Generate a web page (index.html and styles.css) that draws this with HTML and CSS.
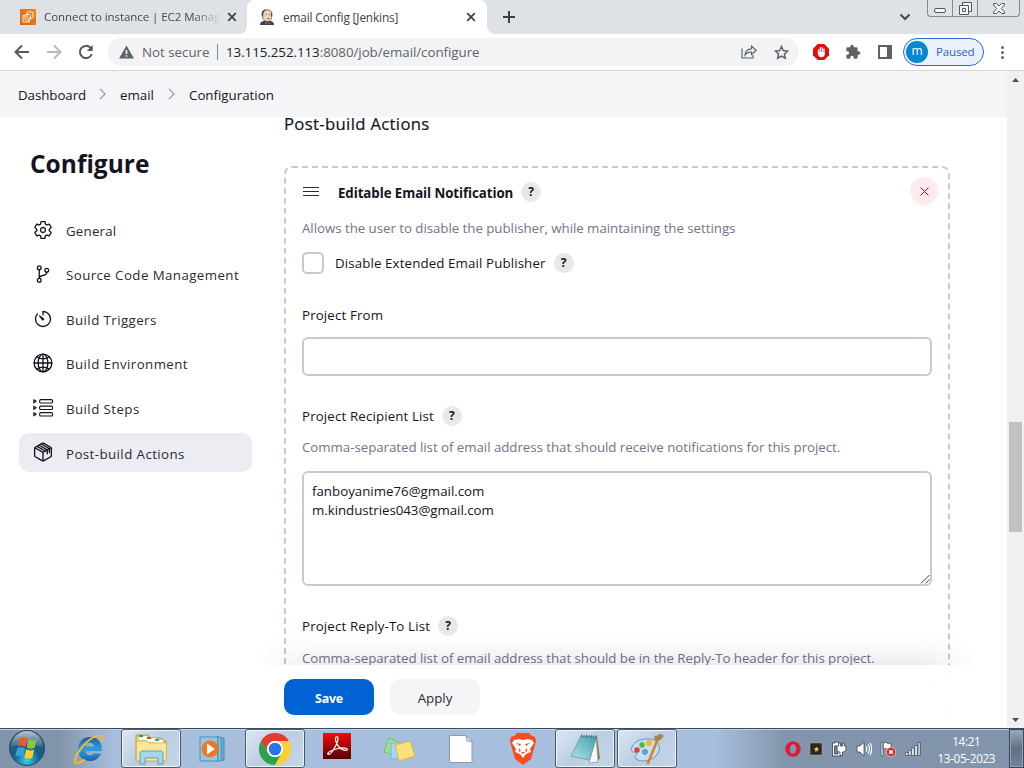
FILE: index.html
```html
<!DOCTYPE html>
<html lang="en">
<head>
<meta charset="utf-8">
<title>email Config [Jenkins]</title>
<link rel="stylesheet" href="styles.css">
</head>
<body>
<div class="screen">
  <header class="tabstrip">
    <div class="tab tab-idle">
      <svg class="fav" viewBox="0 0 16 16"><defs><linearGradient id="aws" x1="0" y1="1" x2="1" y2="0"><stop stop-color="#d86413"/><stop offset="1" stop-color="#f48a12"/></linearGradient></defs><path fill="url(#aws)" d="M0 0h16v16H0z"/><g fill="none" stroke="#fff" stroke-opacity=".9" stroke-width="1"><rect x="7" y="3" width="6" height="6" rx="1"/><path d="M5 6.500H3V13h6.500v-2"/><rect x="5" y="5.500" width="5.500" height="5.500" rx="1"/></g></svg>
      <span class="tab-title fade">Connect to instance | EC2 Manag</span>
      <svg class="x" viewBox="0 0 10 10"><path d="M1.200 1.200l7.600 7.600M8.800 1.200L1.200 8.800"/></svg>
    </div>
    <div class="tab tab-active">
      <svg class="fav" viewBox="0 0 16 16"><path fill="#2f4450" d="M1 16c0-3 2-4 4-4h6c2 0 4 1 4 4z"/><path fill="#ead3b8" stroke="#534638" stroke-width=".7" d="M3.300 6C3 2 5 .8 8 .8s5.200 1.500 4.800 5.200c0 3-.8 6.500-4.300 6.500S3.500 9.500 3.300 6z"/><path fill="#51463f" d="M3 7C1.800 3 4 .3 7.500.4 6 1.500 4.800 2.500 4.400 4.500L4 8zM12 3l1.300 2-.4 3-1-2z"/><path d="M6.500 5.700h1.300M9.700 5.700H11M8 9.600h2.500" stroke="#6c5848" stroke-width=".8"/><path fill="#d33833" d="M6 12.500l2.500 1.200 2.500-1.200v3l-2.500-1.200L6 15.500z"/></svg>
      <span class="tab-title">email Config [Jenkins]</span>
      <svg class="x" viewBox="0 0 10 10"><path d="M1.200 1.200l7.600 7.600M8.800 1.200L1.200 8.800"/></svg>
    </div>
    <svg class="plus" viewBox="0 0 12 12"><path d="M6 0v12M0 6h12"/></svg>
    <svg class="chevron" viewBox="0 0 12 8"><path d="M1.500 1.500L6 6l4.500-4.500"/></svg>
    <div class="winctl">
      <span class="wc"><svg width="12" height="6" viewBox="0 0 12 6"><rect x=".5" y=".5" width="11" height="4" rx="1.500"/></svg></span>
      <span class="wc"><svg width="13" height="13" viewBox="0 0 13 13"><path d="M3.500 3.500v-3h9v9h-3"/><path d="M.5 3.500h9v9h-9zM3.500 6.500h3v3h-3z"/></svg></span>
      <span class="wc wide"><svg width="12" height="11" viewBox="0 0 12 11"><path d="M.5.500h3L6 3 8.500.500h3v1.500L8.300 5.500l3.200 3.500v1.500h-3L6 8l-2.500 2.500h-3V9l3.200-3.500L.5 2z"/></svg></span>
    </div>
  </header>

  <div class="toolbar">
    <svg class="nav" viewBox="0 0 16 16"><path d="M15 8H2M8 1.500L1.500 8 8 14.500"/></svg>
    <svg class="nav off" viewBox="0 0 16 16"><path d="M1 8h13M8 1.500L14.500 8 8 14.500"/></svg>
    <svg class="nav" viewBox="0 0 16 16"><path d="M13.800 10A6.100 6.100 0 1 1 12.500 3.800L14 5.300"/><path class="solid" d="M14.700.9v6H8.800z"/></svg>
    <div class="omnibox">
      <svg width="15" height="14" viewBox="0 0 15 14"><path fill="#5f6368" d="M7.500.500L15 13.500H0z"/><path stroke="#fff" stroke-width="1.500" d="M7.500 5v4M7.500 10.300v1.500"/></svg>
      <span class="insecure">Not secure</span>
      <span class="bar"></span>
      <span class="url"><b>13.115.252.113</b>:8080/job/email/configure</span>
      <svg class="share" width="16" height="16" viewBox="0 0 16 16"><path d="M1 4.500v9.500h11v-3M4 11c.5-4 2.500-6 6.500-6.200V2l4.700 4.300-4.700 4.200V8C7.500 8 5.500 9 4 11z"/></svg>
      <svg class="star" width="15" height="15" viewBox="0 0 15 15"><path d="M7.500 1.500l1.800 4 4.300.5-3.200 2.900.9 4.300-3.800-2.200-3.800 2.200.9-4.300L1.400 6l4.300-.5z"/></svg>
    </div>
    <svg class="ext1" width="16" height="16" viewBox="0 0 16 16"><path fill="#e40d0d" d="M4.700 0h6.600L16 4.700v6.600L11.300 16H4.700L0 11.300V4.700z"/><path d="M5.500 6v4M7.300 3.700v5M9.200 3.700v5M11 5v5" stroke="#fff" stroke-width="1.300" stroke-linecap="round"/><path fill="#fff" d="M4.900 8h6.700v2.500c0 3.500-5.400 3.600-6.200.8z"/></svg>
    <svg class="ext2" width="16" height="16" viewBox="0 0 24 24"><path fill="#5f6368" d="M20.500 11H19V7a2 2 0 0 0-2-2h-4V3.500a2.500 2.500 0 0 0-5 0V5H4a2 2 0 0 0-2 2v3.800h1.500a2.700 2.700 0 0 1 0 5.400H2V20c0 1.100.9 2 2 2h3.800v-1.500a2.700 2.700 0 0 1 5.400 0V22H17a2 2 0 0 0 2-2v-4h1.500a2.500 2.500 0 0 0 0-5z"/></svg>
    <svg class="ext3" width="14" height="14" viewBox="0 0 14 14"><path fill="#5f6368" fill-rule="evenodd" d="M0 0h14v14H0zM2 2v10h7V2z"/></svg>
    <div class="profile"><span class="avatar">m</span><span>Paused</span></div>
    <span class="dots"><i></i><i></i><i></i></span>
  </div>

  <div class="viewport">
    <div class="page">
      <nav class="crumbs">
        <span class="c1">Dashboard</span>
        <svg width="7" height="12" viewBox="0 0 7 12"><path d="M1 1l5 5-5 5"/></svg>
        <span class="c2">email</span>
        <svg width="7" height="12" viewBox="0 0 7 12"><path d="M1 1l5 5-5 5"/></svg>
        <span class="c3">Configuration</span>
      </nav>
      <div class="columns">
        <aside class="side">
          <h1>Configure</h1>
          <ul class="menu">
            <li><svg viewBox="0 0 512 512"><path d="M262.290 192.310a64 64 0 1 0 57.400 57.400 64.130 64.130 0 0 0-57.400-57.400zM416.390 256a154.340 154.340 0 0 1-1.530 20.790l45.210 35.460a10.810 10.810 0 0 1 2.450 13.750l-42.770 74a10.810 10.810 0 0 1-13.140 4.590l-44.900-18.080a16.110 16.110 0 0 0-15.170 1.750A164.480 164.480 0 0 1 325 400.800a15.940 15.940 0 0 0-8.820 12.140l-6.730 47.890a11.080 11.080 0 0 1-10.680 9.170h-85.540a11.110 11.110 0 0 1-10.690-8.870l-6.720-47.820a16.070 16.070 0 0 0-9-12.220 155.300 155.300 0 0 1-21.460-12.570 16 16 0 0 0-15.110-1.710l-44.890 18.070a10.810 10.810 0 0 1-13.140-4.580l-42.770-74a10.800 10.800 0 0 1 2.450-13.750l38.210-30a16.050 16.050 0 0 0 6-14.080c-.36-4.170-.58-8.330-.58-12.500s.21-8.270.58-12.350a16 16 0 0 0-6.070-13.940l-38.190-30A10.810 10.810 0 0 1 49.480 186l42.770-74a10.810 10.810 0 0 1 13.140-4.590l44.900 18.080a16.110 16.110 0 0 0 15.170-1.750A164.480 164.480 0 0 1 187 111.200a15.940 15.940 0 0 0 8.820-12.140l6.730-47.890A11.080 11.080 0 0 1 213.230 42h85.540a11.110 11.110 0 0 1 10.690 8.870l6.720 47.820a16.070 16.070 0 0 0 9 12.220 155.300 155.300 0 0 1 21.460 12.570 16 16 0 0 0 15.110 1.710l44.890-18.070a10.810 10.810 0 0 1 13.140 4.580l42.770 74a10.800 10.800 0 0 1-2.450 13.750l-38.210 30a16.050 16.050 0 0 0-6.050 14.080c.33 4.140.550 8.300.550 12.470z"/></svg><span class="m1">General</span></li>
            <li><svg viewBox="0 0 512 512"><g><circle cx="160" cy="96" r="48"/><circle cx="160" cy="416" r="48"/><circle cx="352" cy="160" r="48"/><path d="M160 368V144M352 208c0 128-192 48-192 160"/></g></svg><span class="m2">Source Code Management</span></li>
            <li><svg viewBox="0 0 512 512"><path d="M112.910 128A191.850 191.850 0 0 0 64 254c-1.180 106.350 85.650 193.800 192 194 106.200.2 192-85.830 192-192 0-104.540-83.550-189.610-187.500-192a4.360 4.360 0 0 0-4.500 4.370V152"/><path fill="#14141f" stroke="none" d="M229 285l-75-106c-7-10 6-22 16-16l106 75c32 28-15 79-47 47z"/></svg><span class="m3">Build Triggers</span></li>
            <li><svg viewBox="0 0 512 512"><circle cx="256" cy="256" r="228"/><path d="M256 28c-64 0-124 102-124 228s60 228 124 228 124-102 124-228S320 28 256 28zM103 103c42 30 96 47 153 47s111-17 153-47M409 409c-42-30-96-47-153-47s-111 17-153 47M256 28v456M484 256H28"/></svg><span class="m4">Build Environment</span></li>
            <li><svg viewBox="0 0 20 20"><g class="thin"><rect x="6.600" y="1.600" width="13" height="3.400" rx="1.300"/><rect x="6.600" y="8.100" width="13" height="3.400" rx="1.300"/><rect x="6.600" y="14.600" width="13" height="3.400" rx="1.300"/><path d="M.8 1.800l2.400 1.500L.8 4.800zM.8 8.300l2.400 1.500-2.400 1.500zM.8 14.800l2.400 1.500-2.400 1.500z"/></g></svg><span class="m5">Build Steps</span></li>
            <li class="on"><svg viewBox="0 0 512 512"><path d="M470 350V162a32 32 0 0 0-16-28L280 36a47.940 47.940 0 0 0-48 0L58 134a32 32 0 0 0-16 28v188a32 32 0 0 0 16 28l174 98a48 48 0 0 0 48 0l174-98a32 32 0 0 0 16-28zM48 146l208 118 208-118M256 480V264M158 82l208 118v100M104 112l208 118M212 52l208 118v100"/></svg><span class="m6">Post-build Actions</span></li>
          </ul>
        </aside>
        <main class="content">
          <h2>Post-build Actions</h2>
          <section class="card">
            <div class="card-head">
              <span class="grip"><i></i><i></i><i></i></span>
              <strong>Editable Email Notification</strong>
              <span class="help">?</span>
              <span class="remove"><svg width="9" height="9" viewBox="0 0 9 9"><path d="M.5.500l8 8M8.500.500l-8 8"/></svg></span>
            </div>
            <p class="hint d1">Allows the user to disable the publisher, while maintaining the settings</p>
            <div class="check"><span class="box"></span><span class="t2">Disable Extended Email Publisher</span><span class="help">?</span></div>
            <div class="label l1"><span>Project From</span></div>
            <div class="input"></div>
            <div class="label l2"><span>Project Recipient List</span><span class="help">?</span></div>
            <p class="hint d2">Comma-separated list of email address that should receive notifications for this project.</p>
            <div class="input area"><span>fanboyanime76@gmail.com</span><br><span class="e2">m.kindustries043@gmail.com</span>
              <svg class="resize" width="10" height="10" viewBox="0 0 10 10"><path d="M1 9.500L9.500 1M5.500 9.500l4-4"/></svg></div>
            <div class="label l3"><span>Project Reply-To List</span><span class="help">?</span></div>
            <p class="hint d3">Comma-separated list of email address that should be in the Reply-To header for this project.</p>
            <div class="input area"></div>
          </section>
        </main>
      </div>
      <div class="actions-shadow"></div>
      <div class="actions"><button class="save">Save</button><button class="apply">Apply</button></div>
    </div>
    <div class="scroll">
      <svg width="7" height="4" viewBox="0 0 7 4"><path d="M3.500 0L7 4H0z"/></svg>
      <span class="thumb"></span>
      <svg width="7" height="4" viewBox="0 0 7 4"><path d="M0 0h7L3.500 4z"/></svg>
    </div>
  </div>

  <footer class="taskbar">
    <div class="start"><svg width="38" height="38" viewBox="0 0 38 38"><defs><radialGradient id="orb" cx=".5" cy=".85" r=".8"><stop stop-color="#37d0ef"/><stop offset=".45" stop-color="#12618d"/><stop offset="1" stop-color="#335571"/></radialGradient><linearGradient id="gl" x2="0" y2="1"><stop stop-color="#fff" stop-opacity=".65"/><stop offset="1" stop-color="#fff" stop-opacity=".08"/></linearGradient></defs><circle cx="19" cy="19" r="17.500" fill="url(#orb)" stroke="#2a4862"/><path fill="url(#gl)" d="M3 18a16 16 0 0 1 32 0c-10-3-22-3-32 0z"/><path fill="#ee5a24" d="M12 9c3-1.500 5-1 7.500.5l-2 8.500c-2.500-1.500-5-2-7.700-.7z"/><path fill="#8cc63f" d="M20.700 10.200c3 1.500 5 1.500 8 0l-2 8.600c-3 1.300-5 1.200-8-.3z"/><path fill="#37a3e0" d="M9.300 19c3-1.300 5-1 7.700.6l-2 8.200c-2.500-1.500-5-1.900-7.700-.6z"/><path fill="#ffcc28" d="M18.300 20.300c3 1.500 5 1.500 8 .2l-2 8.300c-3 1.300-5.200 1.300-8-.3z"/></svg></div>
    <div class="slots">
      <span class="slot"><svg width="32" height="32" viewBox="0 0 32 32"><defs><linearGradient id="ie" x2="0" y2="1"><stop stop-color="#1c5f9e"/><stop offset=".5" stop-color="#2d9fe0"/><stop offset="1" stop-color="#1567ae"/></linearGradient></defs><path fill="url(#ie)" fill-rule="evenodd" d="M17 4C9 4 5 10 5 16.500S9.500 28 17 28c5 0 9-2.500 11-7.500h-7.500c-2 3-8 2.500-8-2.500H29C29.500 10 25 4 17 4zm-4.500 9.500c.5-5 8-5 8.500 0z"/><path fill="none" stroke="#f4ba24" stroke-width="2" stroke-linecap="round" d="M29 8c3-9-9-6-18 4S-1 32 5 30q3-.5 6-3"/></svg></span>
      <span class="slot open"><svg width="34" height="32" viewBox="0 0 34 32"><path fill="#e8cf71" stroke="#b99d3d" d="M2 2h12l2 3h11l2 3h3v20H2z"/><path fill="#fff" d="M5 3h8v4H5zM13 5h9v4h-9zM21 7h8v4h-8z"/><path fill="#16a84a" d="M5 2h4v2H5z"/><path fill="#d7472f" d="M13 4h4v2h-4z"/><path fill="#3496dc" d="M21 6h4v2h-4z"/><path fill="#f8e69b" stroke="#d6b958" d="M2.500 8h11l2 2h17v18h-30z"/><path fill="#a4d7ec" stroke="#5c9fc0" d="M6 31V21c0-2 1-3 3-3h17c2 0 3 1 3 3v10h-5v-6H11v6z"/></svg></span>
      <span class="slot"><svg width="30" height="28" viewBox="0 0 30 28"><path fill="#67abd2" stroke="#4288ae" d="M18 2l8 1v22l-8 1z"/><path fill="#8fc6e2" stroke="#4c91b4" d="M2 2h18v24H2zM20 2h3v24h-3z"/><circle cx="12" cy="14" r="8.500" fill="#f27521"/><path fill="#fff" d="M9 8.500l8 5.500-8 5.500z"/></svg></span>
      <span class="slot open"><svg width="32" height="32" viewBox="0 0 32 32"><path fill="#e33b2e" d="M2.140 8a16 16 0 0 1 27.720 0H16a8 8 0 0 0-7 12z"/><path fill="#2da14c" d="M2.140 8A16 16 0 0 0 16 32l6.900-12A8 8 0 0 1 9 20z"/><path fill="#fdcf2f" d="M29.860 8A16 16 0 0 1 16 32l6.900-12A8 8 0 0 0 16 8z"/><circle cx="16" cy="16" r="8" fill="#fff"/><circle cx="16" cy="16" r="6.300" fill="#2476e8"/></svg></span>
      <span class="slot"><svg class="pdf" width="28" height="26" viewBox="0 0 28 26"><defs><linearGradient id="pd" x2="0" y2="1"><stop stop-color="#f60b0b"/><stop offset="1" stop-color="#560000"/></linearGradient></defs><path fill="url(#pd)" d="M0 0h28v26H0z"/><path fill="none" stroke="#fff" stroke-width="1.200" d="M13.500 4c-2 0-1 6 2 9.500s7 4.500 8.500 3.500-1-2.500-6-2-12 3-13 5 2 2 4-1 6-10 6-13-.5-2-1.500-2z"/></svg></span>
      <span class="slot"><svg width="32" height="28" viewBox="0 0 32 28"><path fill="#9bdf91" stroke="#70bd6d" d="M6 3l10 4-4 14L1 17z"/><path fill="#a6d8f6" stroke="#6fb5e4" d="M8 8h12v16H8z"/><path fill="#fae07b" stroke="#d5b84b" d="M12 10l15-4 5 15-16 5z"/></svg></span>
      <span class="slot"><svg width="24" height="28" viewBox="0 0 24 28"><path fill="#fff" stroke="#8e9cae" d="M.5.500H17l6 6v21H.5z"/><path fill="#e7e9ec" stroke="#8e9cae" d="M17 .5l1 5.500 5 .5z"/></svg></span>
      <span class="slot"><svg width="28" height="33" viewBox="0 0 28 33"><path fill="#fb4b20" d="M8 1h12l3 3 3 1 1 4-1 4-4 14-8 6-8-6L2 13 1 9l1-4 3-1z"/><path fill="#fff" d="M5 8l5-1 4 1 4-1 5 1 2 3-4 6 1 3-5 2-3 4-3-4-5-2 1-3-4-6z"/><path fill="#fb4b20" d="M7 11l5 1-1 2zM21 11l-5 1 1 2zM10 16l2 3-2 1zM18 16l-2 3 2 1zM12 20h4l-2 2z"/></svg></span>
      <span class="slot open"><svg width="32" height="31" viewBox="0 0 32 31"><defs><linearGradient id="np" x1="1" x2="0" y2="1"><stop stop-color="#3e9fae"/><stop offset="1" stop-color="#b2e4e8"/></linearGradient></defs><path fill="#8a7542" d="M28 3l3 23-8 2z"/><path fill="#f5f7f8" stroke="#a2abb0" d="M27 4l2 25-9 1z"/><path fill="url(#np)" stroke="#5796a0" stroke-width=".7" d="M12 3l16 1-8 23-18-4z"/><path stroke="#59666b" stroke-dasharray="1 1.500" stroke-width="3" d="M12 3l17 1"/></svg></span>
      <span class="slot open"><svg width="34" height="32" viewBox="0 0 34 32"><path fill="#c2dfef" stroke="#5a9cc2" d="M17 6c10-1 15 7 11 14-4 8-16 10-22 6-3-2 3-5 0-7-5 1-5-2-4-5 2-5 8-8 15-8z"/><circle cx="7" cy="17" r="2.700" fill="#e43b39"/><circle cx="12" cy="12" r="2.700" fill="#52b83c"/><circle cx="19" cy="10" r="3" fill="#f2b91f"/><circle cx="15" cy="19" r="2.300" fill="#72aed2" stroke="#397fa9"/><path stroke="#dd7f28" stroke-width="2.600" stroke-linecap="round" d="M27 8l-9 22"/><path fill="#ad8252" d="M26 8c-3-3-2-6 1-5 2-3 5-2 7 0-2 2-3 5-8 5z"/></svg></span>
    </div>
    <div class="tray">
      <svg width="16" height="16" viewBox="0 0 16 16"><path fill="#dc1d33" fill-rule="evenodd" d="M8 .3a7.700 7.700 0 1 0 0 15.400A7.700 7.700 0 0 0 8 .3zm0 2.900c4.200 0 4.200 9.600 0 9.600S3.800 3.200 8 3.200z"/></svg>
      <svg width="14" height="14" viewBox="0 0 16 16"><path fill="#999" d="M0 0h16v16H0z"/><path fill="#272727" d="M1.500 1.500h13v13h-13z"/><path fill="#fc3" d="M8.500 5l.9 2.200 2.300.2-1.800 1.500.6 2.300-2-1.200-2 1.200.6-2.300-1.800-1.500 2.300-.2z"/></svg>
      <svg width="16" height="16" viewBox="0 0 16 16"><g fill="#fff" stroke="#31404f" stroke-width=".8"><path d="M4 2H1.500v13H10V3H7.500V1H4z"/><path fill="#73859b" d="M3.500 5H7v8H3.500z"/><path d="M6 5h1.700V2h1.800v3h2V2h1.800v3h1.700v3c0 2-2 3-3.500 3v3.500H9V11c-2 0-3-1-3-3z"/></g></svg>
      <svg width="16" height="16" viewBox="0 0 16 16"><path fill="#fff" stroke="#3b4a59" stroke-width=".8" d="M1 5h3l4-4v14l-4-4H1z"/><path fill="none" stroke="#fff" stroke-width="1.200" d="M10 5.500q1.500 2.500 0 5M12 3.500q3 4.500 0 9M14 2q3.500 6 0 12"/></svg>
      <svg width="16" height="16" viewBox="0 0 16 16"><path fill="#fff" stroke="#43505e" stroke-width=".8" d="M1 1h2v14H1zM3 2c4-2 4 2 8 0v6C7 10 7 6 3 8z"/><circle cx="11" cy="11" r="4.700" fill="#d32b25" stroke="#fff" stroke-width=".5"/><path stroke="#fff" stroke-width="1.500" d="M9.200 9.200l3.600 3.600M12.800 9.200l-3.600 3.600"/></svg>
      <svg width="16" height="14" viewBox="0 0 16 14"><g fill="#fff" stroke="#45525f" stroke-width=".8"><path d="M.5 10.500H3v3H.5zM3.600 8.500h2.500v5H3.600zM6.700 6h2.500v7.500H6.700zM9.800 3.500h2.500v10H9.800z"/><path fill="#cdd5de" d="M12.900.5h2.500v13h-2.500z"/></g></svg>
    </div>
    <div class="clock"><span>14:21</span><span>13-05-2023</span></div>
    <div class="peek"></div>
  </footer>
</div>
</body>
</html>
```
FILE: styles.css
```css
* { box-sizing: border-box; }
body { margin: 0; font-family: "Open Sans", "Noto Sans", sans-serif; color: #14141f; }
svg { display: block; flex: none; }
span { white-space: nowrap; }
.screen { width: 1024px; height: 768px; display: flex; flex-direction: column; overflow: hidden; background: #fff; }

/* tab strip */
.tabstrip { height: 34px; flex: none; display: flex; background: linear-gradient(90deg, #dee1e6 240px, #fff 240px, #fff 495px, #dee1e6 495px); }
.tab { display: flex; align-items: center; font-size: 11.500px; color: #45484d; }
.tab-idle { width: 247px; padding-left: 20px; border-bottom-right-radius: 8px; background: #dee1e6; }
.tab-active { position: relative; width: 240px; padding-left: 12px; background: #fff; color: #3c4043; }
.tab-active::before, .tab-active::after { content: ""; position: absolute; top: 0; width: 8px; height: 8px; }
.tab-active::before { left: 0; background: radial-gradient(circle at 100% 100%, #fff 7.500px, #dee1e6 8.500px); }
.tab-active::after { right: 0; background: radial-gradient(circle at 0 100%, #fff 7.500px, #dee1e6 8.500px); }
.tab-active + .plus { box-sizing: content-box; padding: 11px 0 11px 16px; margin: 0; background: #dee1e6; border-bottom-left-radius: 8px; }
.fav { width: 16px; height: 16px; }
.tab-title { width: 176px; margin-left: 8px; overflow: hidden; line-height: 18px; }
.tab-idle .tab-title { letter-spacing: -.06px; }
.tab-active .tab-title { width: 183px; font-size: 11.800px; letter-spacing: -.13px; }
.fade { -webkit-mask-image: linear-gradient(90deg, #000 150px, transparent 176px); mask-image: linear-gradient(90deg, #000 150px, transparent 176px); }
.x { width: 10px; height: 10px; margin-left: 7px; fill: none; stroke: #3c4043; stroke-width: 1.700; }
.tab-active .x { margin-left: 0; }
.plus { width: 12px; height: 12px; stroke: #3c4043; stroke-width: 2; }
.chevron { width: 12px; height: 8px; margin: 13px 16px 0 auto; fill: none; stroke: #45484d; stroke-width: 2; }
.winctl { display: flex; width: 93px; height: 17px; margin-right: 4px; border: 1px solid #85888d; border-top: 0; border-radius: 0 0 4px 4px; }
.wc { width: 25px; display: flex; justify-content: center; align-items: center; border-right: 1px solid #85888d; }
.wc:first-child { padding-top: 5px; }
.wc.wide { width: 41px; border: 0; }
.wc svg { fill: #f4f5f7; stroke: #55585d; }

/* toolbar */
.toolbar { height: 37px; flex: none; display: flex; align-items: center; padding-left: 14px; border-bottom: 1px solid #d5d7da; background: #fff; }
.nav { width: 16px; height: 16px; margin-right: 16px; fill: none; stroke: #55595e; stroke-width: 2; }
.nav.off { stroke: #b7b9bc; }
.nav .solid { fill: #55595e; stroke: none; }
.omnibox { width: 691px; height: 28px; margin-left: -2px; padding-left: 11px; display: flex; align-items: center; border-radius: 14px; background: #f1f3f4; font-size: 13.300px; color: #5f6368; }
.insecure { margin-left: 8px; width: 67px; letter-spacing: .01px; }
.bar { width: 1px; height: 16px; margin: 0 8px; background: #85888c; }
.url { letter-spacing: -.03px; }
.url b { font-weight: 400; color: #202124; }
.share { margin-left: auto; fill: none; stroke: #5f6368; stroke-width: 1.200; }
.star { margin: 0 10px 0 17px; fill: none; stroke: #5f6368; stroke-width: 1.500; }
.ext1 { margin-left: 14px; }
.ext2 { margin-left: 16px; }
.ext3 { margin-left: 17px; }
.profile { width: 81px; height: 28px; margin-left: 11px; padding-left: 2px; display: flex; align-items: center; gap: 8px; border: 1px solid #2468d0; border-radius: 14px; background: #eaf1fb; color: #2b62c6; font-size: 11.500px; letter-spacing: -.15px; }
.profile span:last-child { margin-top: -1px; }
.avatar { width: 22px; height: 22px; border-radius: 50%; background: #0288d1; color: #fff; text-align: center; line-height: 20px; font-size: 12px; }
.dots { margin-left: 17px; display: grid; gap: 2px; }
.dots i { width: 3px; height: 3px; border-radius: 50%; background: #5f6368; }

/* page */
.viewport { height: 657px; flex: none; display: flex; }
.page { position: relative; width: 1007px; height: 657px; overflow: hidden; }
.crumbs { height: 46px; padding: 1px 0 0 18px; display: flex; align-items: center; background: #f5f5f8; font-size: 13.300px; }
.crumbs svg { fill: none; stroke: #9a9ab0; stroke-width: 1.300; margin: -2px 14px 0 13px; }
.crumbs .c1 { width: 68px; letter-spacing: -.05px; }
.c2 { width: 34px; }
.c2 + svg { margin-left: 14px; }
.columns { height: 611px; display: flex; overflow: hidden; }
.side { width: 284px; flex: none; padding-left: 19px; }
h1 { margin: 29px 0 0 11px; font-size: 24.500px; line-height: 36px; font-weight: 700; }
.menu { list-style: none; margin: 28px 0 0; padding: 0; display: grid; gap: 5.600px; }
.menu li { width: 233px; height: 39px; padding-left: 14px; display: flex; align-items: center; gap: 13px; border-radius: 10px; font-size: 13.300px; letter-spacing: .42px; color: #2a2a35; }
.menu li span { padding-top: 2px; }
.menu .m1 { letter-spacing: .2px; }
.menu .on .m6 { padding-top: 3px; }
.menu svg { width: 20px; height: 20px; overflow: visible; fill: none; stroke: #14141f; stroke-width: 34; stroke-linecap: round; stroke-linejoin: round; }
.menu .thin { stroke-width: 1.100; }
.menu .on { background: #ecedf3; }
.content { width: 666px; }
h2 { margin: 0 0 35px; font-size: 16.700px; line-height: 14px; font-weight: 400; letter-spacing: .33px; -webkit-text-stroke: .2px #14141f; }
.card { height: 640px; padding: 9px 16px; border: 2px dashed #c3ccd1; border-radius: 8px; font-size: 13.300px; }
.card-head { display: flex; align-items: center; height: 28px; }
.grip { width: 16px; display: grid; gap: 2.500px; margin: 1px 19px 0 1px; }
.grip i { height: 1.500px; background: #2a2a35; }
.card-head strong { padding-top: 3px; font-size: 13.300px; font-weight: 700; letter-spacing: -.08px; }
.help { width: 20px; height: 20px; margin-left: 8px; border-radius: 50%; background: #e8e8e8; text-align: center; line-height: 20px; font-weight: 700; font-size: 12px; }
.card-head .help { margin-top: 2px; }
.remove { width: 28px; height: 28px; margin: 0 -6px 0 auto; display: grid; place-items: center; border-radius: 50%; background: #fdebed; }
.remove svg { stroke: #e6001f; stroke-width: 1; }
.hint { margin: 0; line-height: 20px; color: #73738c; white-space: nowrap; letter-spacing: -.04px; }
.d1 { margin-top: 13px; }
.check { height: 22px; margin-top: 14px; display: flex; align-items: center; }
.t2 { letter-spacing: .12px; }
.box { width: 22px; height: 22px; margin-right: 11px; border: 2px solid #c3ccd1; border-radius: 5px; }
.label { height: 20px; display: flex; align-items: center; }
.label span:first-child { margin-top: -1px; letter-spacing: .14px; }
.l1 { margin-top: 31px; }
.l2 { margin-top: 30px; }
.l3 { margin-top: 30px; }
.d2 { margin-top: 11px; }
.d3 { margin-top: 12px; }
.input { height: 39px; margin-top: 12px; border: 2px solid #c3ccd1; border-radius: 6px; background: #fff; }
.area { position: relative; height: 115px; margin-top: 14px; padding: 9px 8px; line-height: 19px; }
.area .e2 { letter-spacing: -.04px; }
.resize { position: absolute; right: 0; bottom: 0; stroke: #444; }
.actions-shadow { position: absolute; left: 258px; top: 560px; width: 720px; height: 34px; background: linear-gradient(0deg, rgba(0,0,0,.07), rgba(0,0,0,.015) 60%, transparent); -webkit-mask-image: linear-gradient(90deg, transparent, #000 60px, #000 660px, transparent); mask-image: linear-gradient(90deg, transparent, #000 60px, #000 660px, transparent); }
.actions { position: absolute; left: 258px; right: 0; bottom: 0; height: 63px; padding: 14px 26px; display: flex; gap: 16px; background: rgba(255,255,255,.97); }
button { width: 90px; height: 36px; padding: 2px 0 0; border: 0; border-radius: 10px; font: 13.300px "Open Sans", sans-serif; }
.save { background: #0062d3; color: #fff; font-weight: 700; font-size: 12.400px; letter-spacing: -.2px; }
.apply { background: #f5f5f8; color: #2a2a35; }
.scroll { width: 17px; padding: 7px 0 6px; display: flex; flex-direction: column; align-items: center; justify-content: space-between; background: #f0f0f0; }
.scroll svg { fill: #505050; }
.thumb { width: 13px; height: 110px; margin-top: 153px; background: #c1c1c1; }

/* taskbar */
.taskbar { height: 40px; flex: none; display: flex; border-top: 1px solid #3c4b5f; box-shadow: inset 0 1px #c3d2e3; background: linear-gradient(90deg, #8294ab 58px, #a7bfdc 115px, #a7bfdc 715px, #8395ac 785px); }
.start { width: 59px; padding-left: 8px; }
.slots { display: flex; gap: 2px; }
.slot { width: 60px; height: 39px; display: grid; place-items: center; }
.slot.open { border: 1px solid #4a596c; border-radius: 3px; box-shadow: inset 0 0 0 1px #edf4fb; background: linear-gradient(135deg, #dce6f2, #bccde2 50%, #c7d6e8); }
.pdf { margin-top: -5px; }
.tray { margin-left: 108px; display: flex; align-items: center; gap: 8.400px; }
.clock { width: 86px; margin-left: 3px; padding-top: 4px; display: grid; grid-auto-rows: 17px; justify-items: center; color: #fff; font-size: 11.700px; line-height: 16px; letter-spacing: -.32px; }
.peek { width: 15px; margin-left: auto; border: 1px solid #38475a; background: linear-gradient(#9caaba, #5f7185 50%, #72849a); box-shadow: inset 0 0 0 1px #93a4b7; }
```
